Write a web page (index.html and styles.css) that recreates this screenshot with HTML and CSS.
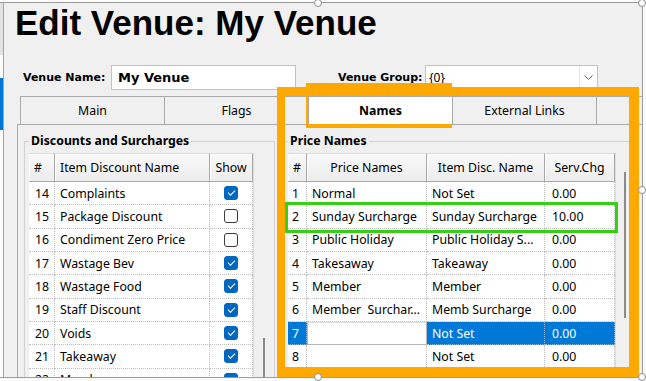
FILE: index.html
```html
<!DOCTYPE html>
<html lang="en">
<head>
  <meta charset="UTF-8" />
  <title>Edit Venue: My Venue</title>
  <link rel="stylesheet" href="styles.css">
</head>
<body>
  <div class="screen">
    <div class="frame">
      <div class="backwin"></div>

      <div class="form">
        <h1 class="title">Edit Venue: My Venue</h1>

        <div class="venue-row">
          <label class="lbl">Venue Name:</label>
          <div class="input">My Venue</div>
          <label class="lbl lbl-group">Venue Group:</label>
          <div class="combo">
            <span>{0}</span>
            <span class="drop">
              <svg width="9" height="5" viewBox="0 0 9 5"><polyline points="0.5,0.5 4.5,4.5 8.5,0.5" fill="none" stroke="#606060" stroke-width="1"/></svg>
            </span>
          </div>
        </div>

        <!-- Tabs -->
        <div class="tabs">
          <div class="tab">Main</div>
          <div class="tab">Flags</div>
          <div class="tab active">Names</div>
          <div class="tab">External Links</div>
          <div class="tab"></div>
        </div>

        <div class="page">
          <fieldset class="group group-left">
            <legend>Discounts and Surcharges</legend>
            <div class="grid">
              <div class="dg dg-left">
                <div class="hd">#</div>
                <div class="hd">Item Discount Name</div>
                <div class="hd center">Show</div>

                <div class="c num">14</div><div class="c">Complaints</div><div class="c center"><span class="chk on"></span></div>
                <div class="c num">15</div><div class="c">Package Discount</div><div class="c center"><span class="chk"></span></div>
                <div class="c num">16</div><div class="c">Condiment Zero Price</div><div class="c center"><span class="chk"></span></div>
                <div class="c num">17</div><div class="c">Wastage Bev</div><div class="c center"><span class="chk on"></span></div>
                <div class="c num">18</div><div class="c">Wastage Food</div><div class="c center"><span class="chk on"></span></div>
                <div class="c num">19</div><div class="c">Staff Discount</div><div class="c center"><span class="chk on"></span></div>
                <div class="c num">20</div><div class="c">Voids</div><div class="c center"><span class="chk on"></span></div>
                <div class="c num">21</div><div class="c">Takeaway</div><div class="c center"><span class="chk on"></span></div>
                <div class="c num">22</div><div class="c">Member</div><div class="c center"><span class="chk on"></span></div>
              </div>
              <div class="vscroll vscroll-left"><div class="thumb"></div></div>
            </div>
          </fieldset>

          <fieldset class="group group-right">
            <legend>Price Names</legend>
            <div class="grid">
              <div class="dg dg-right">
                <div class="hd center">#</div>
                <div class="hd center">Price Names</div>
                <div class="hd center">Item Disc. Name</div>
                <div class="hd center">Serv.Chg</div>

                <div class="c num">1</div><div class="c">Normal</div><div class="c">Not Set</div><div class="c chg">0.00</div>
                <div class="c num">2</div><div class="c">Sunday Surcharge</div><div class="c">Sunday Surcharge</div><div class="c chg">10.00</div>
                <div class="c num">3</div><div class="c">Public Holiday</div><div class="c">Public Holiday S...</div><div class="c chg">0.00</div>
                <div class="c num">4</div><div class="c">Takesaway</div><div class="c">Takeaway</div><div class="c chg">0.00</div>
                <div class="c num">5</div><div class="c">Member</div><div class="c">Member</div><div class="c chg">0.00</div>
                <div class="c num">6</div><div class="c">Member&nbsp; Surchar...</div><div class="c">Memb Surcharge</div><div class="c chg">0.00</div>
                <div class="c num sel">7</div><div class="c editor"></div><div class="c sel">Not Set</div><div class="c chg sel">0.00</div>
                <div class="c num">8</div><div class="c"></div><div class="c">Not Set</div><div class="c chg">0.00</div>
              </div>
              <div class="vscroll vscroll-right"><div class="thumb"></div></div>
            </div>
          </fieldset>
        </div>
      </div>
    </div>

    <!-- Разметка скриншота -->
    <div class="mark mark-panel"></div>
    <div class="mark mark-tab"></div>
    <div class="mark-row"></div>

    <span class="handle h-top-mid"></span>
    <span class="handle h-top-right"></span>
    <span class="handle h-mid-right"></span>
    <span class="handle h-bot-mid"></span>
    <span class="handle h-bot-right"></span>
  </div>
</body>
</html>
```

FILE: styles.css
```css
* { box-sizing: border-box; margin: 0; padding: 0; }
html, body {
  width: 100%; height: 100%;
  background: #fafafa; font-family: 'Noto Sans', sans-serif; font-size: 12.3px; color: #000;
}

.screen { position: relative; width: 646px; height: 381px; overflow: hidden; }

/* Окно формы */
.frame {
  display: flex; width: 643px; height: 376px; margin-top: 2px;
  background: #f0f0f0; border: 1px solid #9b9b9b; border-left: none; overflow: hidden;
}
.backwin {
  flex: none; width: 4px; border-right: 1px solid #a5a5a5;
  background: linear-gradient(#e2e2e2 0 52px, #fff 52px 75px, #0078d7 75px 127px, #fff 127px);
}
.form { flex: 1; min-width: 0; }

.title {
  font-family: 'Liberation Sans', Arial, sans-serif; font-weight: bold; font-size: 35px;
  line-height: 40px; padding-left: 11px; white-space: nowrap;
}

.venue-row { display: flex; align-items: center; height: 26px; margin-top: 21px; padding-left: 19px; }
.lbl { font-family: 'DejaVu Sans', sans-serif; font-weight: bold; font-size: 11px; width: 88px; white-space: nowrap; }
.lbl-group { margin-left: 42px; width: 87px; }
.input {
  display: flex; align-items: center; width: 185px; height: 25px; padding-left: 6px;
  background: #fff; border: 1px solid #c2c2c2;
  font-family: 'DejaVu Sans', sans-serif; font-weight: bold; font-size: 13px;
}
.combo {
  display: flex; align-items: center; width: 173px; height: 25px; padding-left: 3px;
  background: #fff; border: 1px solid #c2c2c2; font-size: 12px;
}
.combo .drop {
  display: flex; align-items: center; justify-content: center;
  width: 18px; height: 23px; margin-left: auto; border-left: 1px solid #e3e3e3;
}

/* Вкладки */
.tabs { display: flex; height: 28px; margin: 6px 0 0 16px; }
.tab {
  flex: none; display: flex; align-items: center; justify-content: center;
  width: 145px; height: 28px; margin-right: -1px;
  background: #f0f0f0; border: 1px solid #a9a9a9; border-bottom: none; white-space: nowrap;
}
.tab.active { background: #fff; font-weight: bold; position: relative; z-index: 1; }

.page {
  display: flex; align-items: flex-start; height: 260px; margin-left: 13px;
  border-top: 1px solid #a9a9a9; border-left: 1px solid #a9a9a9;
}

/* Группы */
.group { flex: none; margin-top: 8px; padding: 4px 4px 0; border: 1px solid #d2d2d2; height: 260px; }
.group legend { padding: 0 2px; font-weight: bold; font-size: 12.3px; line-height: 16px; }
.group-left { margin-left: 6px; width: 251px; }
.group-right { margin-left: 8px; width: 352px; }

.grid { display: flex; background: #f0f0f0; height: 240px; }

.dg { display: grid; grid-template-rows: 29px; grid-auto-rows: 23.333px; align-content: start; }
.dg-left { grid-template-columns: 26px 155px 43px; }
.dg-right { grid-template-columns: 19px 120px 118px 70px; }

.hd {
  display: flex; align-items: center; padding-left: 5px; white-space: nowrap;
  background: linear-gradient(#f9f9f9, #ececec);
  border-right: 1px solid #a9a9a9; border-bottom: 1px solid #a9a9a9; border-top: 1px solid #d3dde3;
  box-shadow: inset 1px 1px 0 #fff;
}
.c {
  display: flex; align-items: center; padding-left: 5px; white-space: nowrap; overflow: hidden;
  background: #fff; border-right: 1px dotted #bdbdbd; border-bottom: 1px dotted #bdbdbd;
}
.center { justify-content: center; padding-left: 0; }
.dg-left .num { padding-left: 6px; }
.dg-right .num { padding-left: 4px; }
.dg-right .chg { padding-left: 7px; }

.c.sel { background: #0078d7; color: #fff; border-color: #8fbfe8; }
.c.editor { background: #fff; border: 1px solid #b5b5b5; border-top-color: #dcdcdc; }

.chk {
  display: block; width: 14px; height: 14px; border-radius: 3px;
  background: #fff; border: 1px solid #3a3a3a;
}
.chk.on { background: #0067c0; border-color: #0067c0; }
.chk.on::after {
  content: ''; display: block; width: 6px; height: 3px; margin: 3px 0 0 3px;
  border-left: 1.4px solid #fff; border-bottom: 1.4px solid #fff; transform: rotate(-45deg);
}

.vscroll { flex: none; display: flex; justify-content: flex-end; border-left: 1px solid #dcdcdc; }
.vscroll .thumb { width: 2px; background: #8a8a8a; }
.vscroll-left { width: 17px; padding-right: 5px; }
.vscroll-left .thumb { margin-top: 185px; height: 80px; }
.vscroll-right { width: 15px; padding-right: 4px; }
.vscroll-right .thumb { margin-top: 19px; height: 146px; }

/* Оранжевые и зелёная рамки поверх */
.mark { position: absolute; border: 9px solid #ffa900; }
.mark-panel { left: 277px; top: 87px; width: 362px; height: 290px; border-width: 9px 10px 10px 8px; }
.mark-tab { left: 306px; top: 83px; width: 146px; height: 45px; }
.mark-row { position: absolute; left: 285px; top: 202px; width: 333px; height: 31px; border: 3px solid #35d015; }

.handle {
  position: absolute; width: 8px; height: 8px; border-radius: 50%;
  background: #fff; border: 1px solid #8c8c8c;
}
.h-top-mid { left: 314px; top: -1px; }
.h-top-right { left: 638px; top: -1px; }
.h-mid-right { left: 638px; top: 186px; }
.h-bot-mid { left: 314px; top: 373px; }
.h-bot-right { left: 638px; top: 373px; }
```
